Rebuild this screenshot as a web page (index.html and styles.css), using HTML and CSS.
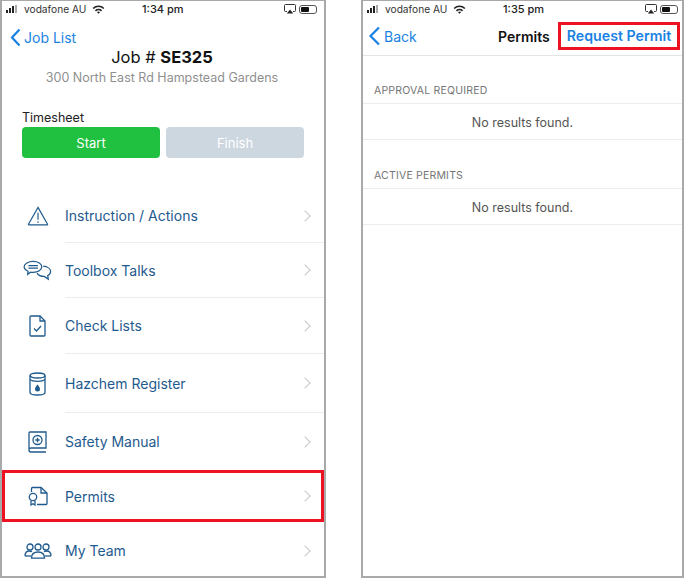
FILE: index.html
```html
<!DOCTYPE html>
<html lang="en">
<head>
    <meta charset="UTF-8">
    <meta name="viewport" content="width=device-width, initial-scale=1.0">
    <title>Job SE325 and Permits</title>
    <link rel="stylesheet" href="styles.css">
</head>
<body>
    <!-- Job screen -->
    <div class="phone phone-job">
        <div class="status-bar">
            <span class="signal"><i class="b1"></i><i class="b2"></i><i class="b3"></i><i class="b4"></i></span>
            <span class="carrier">vodafone AU</span>
            <svg class="wifi" width="13" height="9" viewBox="0 0 13 9"><path d="M0.6 3a8.4 8.4 0 0 1 11.8 0l-1.1 1.1a6.8 6.8 0 0 0-9.6 0z M2.9 5.3a5.2 5.2 0 0 1 7.2 0L9 6.4a3.6 3.6 0 0 0-5 0z M5 7.3a2 2 0 0 1 3 0L6.5 8.8z" fill="#222"/></svg>
            <span class="clock">1:34 pm</span>
            <svg class="airplay" width="12" height="10" viewBox="0 0 12 10"><path d="M3 7.5H1.5a1 1 0 0 1-1-1V1.5a1 1 0 0 1 1-1h9a1 1 0 0 1 1 1v5a1 1 0 0 1-1 1H9" fill="none" stroke="#333"/><path d="M6 5.5L9.2 9.5H2.8z" fill="#222"/></svg>
            <span class="battery"><i></i></span>
        </div>

        <a class="back-link">
            <svg width="11" height="19" viewBox="0 0 11 19"><path d="M9.5 1.5L2 9.5l7.5 8" fill="none" stroke="#1a82e2" stroke-width="2.2"/></svg>
            Job List
        </a>

        <div class="job-head">
            <h1>Job # <b>SE325</b></h1>
            <p>300 North East Rd Hampstead Gardens</p>
        </div>

        <div class="timesheet">
            <div class="timesheet-label">Timesheet</div>
            <div class="timesheet-btns">
                <button class="btn-start">Start</button>
                <button class="btn-finish">Finish</button>
            </div>
        </div>

        <ul class="menu">
            <li class="menu-row">
                <span class="menu-icon">
                    <svg width="22" height="20" viewBox="0 0 24 22"><path d="M12 1.5L22.5 20a.5.5 0 0 1-.4.7H1.9a.5.5 0 0 1-.4-.7z"/><path d="M12 7.5v7.5M12 16.8v1.7"/></svg>
                </span>
                <span class="menu-body">Instruction / Actions<i class="chevron"></i></span>
            </li>
            <li class="menu-row">
                <span class="menu-icon">
                    <svg width="29" height="21" viewBox="0 0 30 22"><path d="M10.5 1.5c5 0 9 2.4 9 5.7s-4 5.800-9 5.800c-1 0-2 0-2.800-.2L4.700 15l.4-3.200C2.800 10.800 1 9.200 1 7.200 1 3.900 5.500 1.500 10.500 1.500z"/><path d="M5.500 5.800h10M5.500 8.500h10"/><path d="M21 6.500c4.300.4 7.700 2.600 7.700 5.500 0 1.800-1.200 3.300-3 4.200l.6 3.800-4.200-2.800c-3.200 0-6.300-1.200-7.600-3.500"/></svg>
                </span>
                <span class="menu-body">Toolbox Talks<i class="chevron"></i></span>
            </li>
            <li class="menu-row">
                <span class="menu-icon">
                    <svg width="17" height="22" viewBox="0 0 17 22"><path d="M2 1h9l5 5v14a1 1 0 0 1-1 1H2a1 1 0 0 1-1-1V2a1 1 0 0 1 1-1z"/><path d="M11 1v5h5"/><path d="M5 13.500l2.500 2.500 4.500-5"/></svg>
                </span>
                <span class="menu-body">Check Lists<i class="chevron"></i></span>
            </li>
            <li class="menu-row">
                <span class="menu-icon">
                    <svg width="17" height="24" viewBox="0 0 17 24"><ellipse cx="8.500" cy="3.500" rx="7.500" ry="2.500"/><path d="M1 3.500v17c0 1.500 3.400 2.500 7.500 2.500s7.500-1 7.500-2.500v-17"/><path d="M1 7.500c1.500 1.300 4 1.800 7.500 1.800s6-.5 7.500-1.800"/><path class="solid" d="M8.500 12.500c1.500 2 2.500 3.200 2.500 4.500a2.500 2.500 0 0 1-5 0c0-1.300 1-2.500 2.500-4.500z"/></svg>
                </span>
                <span class="menu-body">Hazchem Register<i class="chevron"></i></span>
            </li>
            <li class="menu-row">
                <span class="menu-icon">
                    <svg width="19" height="22" viewBox="0 0 19 22"><path d="M1 18V2a1 1 0 0 1 1-1h16v16H3a2 2 0 0 0 0 4h15"/><circle cx="9.500" cy="9" r="4.500"/><path d="M9.500 6.800v4.400M7.300 9h4.400"/></svg>
                </span>
                <span class="menu-body">Safety Manual<i class="chevron"></i></span>
            </li>
            <li class="menu-row menu-row-marked">
                <span class="menu-icon">
                    <svg width="20" height="20" viewBox="0 0 20 20"><path d="M3.500 6V2.500a1 1 0 0 1 1-1H13l6 5.500v10.500a1 1 0 0 1-1 1H9"/><path d="M13 1.500V7h6"/><circle cx="5" cy="11" r="3.700"/><path d="M3 14.500V19l2-1.300L7 19v-4.500"/></svg>
                </span>
                <span class="menu-body">Permits<i class="chevron"></i></span>
            </li>
            <li class="menu-row">
                <span class="menu-icon">
                    <svg width="28" height="16" viewBox="0 0 28 16"><circle cx="6" cy="4" r="3"/><circle cx="14" cy="4" r="3"/><circle cx="22" cy="4" r="3"/><path d="M1 13c0-3 1.800-5 4.500-5 1 0 1.800.2 2.500.7"/><path d="M27 13c0-3-1.800-5-4.500-5-1 0-1.800.2-2.500.7"/><path d="M7.500 15.200c0-4 2.500-6.200 6.500-6.200s6.500 2.200 6.500 6.200z"/><path d="M1 13h6"/><path d="M21 13h6"/></svg>
                </span>
                <span class="menu-body">My Team<i class="chevron"></i></span>
            </li>
        </ul>
    </div>

    <!-- Permits screen -->
    <div class="phone phone-permits">
        <div class="status-bar">
            <span class="signal"><i class="b1"></i><i class="b2"></i><i class="b3"></i><i class="b4"></i></span>
            <span class="carrier">vodafone AU</span>
            <svg class="wifi" width="13" height="9" viewBox="0 0 13 9"><path d="M0.6 3a8.4 8.4 0 0 1 11.8 0l-1.1 1.1a6.8 6.8 0 0 0-9.6 0z M2.9 5.3a5.2 5.2 0 0 1 7.2 0L9 6.4a3.6 3.6 0 0 0-5 0z M5 7.3a2 2 0 0 1 3 0L6.5 8.8z" fill="#222"/></svg>
            <span class="clock">1:35 pm</span>
            <svg class="airplay" width="12" height="10" viewBox="0 0 12 10"><path d="M3 7.5H1.5a1 1 0 0 1-1-1V1.5a1 1 0 0 1 1-1h9a1 1 0 0 1 1 1v5a1 1 0 0 1-1 1H9" fill="none" stroke="#333"/><path d="M6 5.500L9.200 9.500H2.800z" fill="#222"/></svg>
            <span class="battery"><i></i></span>
        </div>

        <div class="nav-bar">
            <a class="nav-back">
                <svg width="13" height="20" viewBox="0 0 13 20"><path d="M11 1.500L2.500 10l8.500 8.500" fill="none" stroke="#1a82e2" stroke-width="2.200"/></svg>
                Back
            </a>
            <span class="nav-title">Permits</span>
            <a class="nav-action">Request Permit</a>
        </div>

        <h2 class="group-head">APPROVAL REQUIRED</h2>
        <div class="group-row">No results found.</div>
        <h2 class="group-head">ACTIVE PERMITS</h2>
        <div class="group-row">No results found.</div>
    </div>
</body>
</html>
```

FILE: styles.css
```css
:root {
    --blue: #1a82e2;
    --navy: #1f5a8e;
    --line: #ececec;
    --frame: #a9a9a9;
}

*, *::before, *::after {
    box-sizing: border-box;
    margin: 0;
    padding: 0;
}

html, body {
    height: 578px;
    overflow: hidden;
}

body {
    width: 687px;
    display: flex;
    justify-content: space-between;
    padding-right: 3px;
    background: #fff;
    font-family: Inter, "Liberation Sans", sans-serif;
    color: #111;
}

.phone {
    height: 578px;
    background: #fff;
    border: 2px solid var(--frame);
    border-top-width: 1px;
    overflow: hidden;
}

.phone-job {
    width: 326px;
}

.phone-permits {
    width: 323px;
}

/* status bar */
.status-bar {
    height: 16px;
    display: flex;
    align-items: center;
    padding-left: 4px;
    font-size: 10.2px;
    color: #333;
}

.signal {
    display: flex;
    align-items: flex-end;
    gap: 1px;
    height: 8px;
    width: 15px;
}

.signal i {
    width: 2px;
    background: #222;
}

.signal .b1 { height: 3px; }
.signal .b2 { height: 5px; }
.signal .b3 { height: 7px; }
.signal .b4 { height: 8px; background: #aaa; }

.carrier {
    margin-left: 3px;
    width: 66px;
    white-space: nowrap;
}

.wifi {
    margin-left: 2px;
}

.clock {
    margin-left: 37px;
    width: 42px;
    font-size: 11px;
    font-weight: 500;
    color: #222;
    white-space: nowrap;
}

.airplay {
    margin-left: 100px;
}

.battery {
    margin-left: 3px;
    width: 18px;
    height: 9px;
    padding: 1px;
    border: 1px solid #555;
    border-radius: 3px;
}

.battery i {
    display: block;
    width: 8px;
    height: 100%;
    background: #111;
    border-radius: 1px;
}

/* job header */
.back-link {
    height: 22px;
    margin-top: 9px;
    padding-left: 8px;
    display: flex;
    align-items: center;
    gap: 3px;
    font-size: 14px;
    color: var(--blue);
}

.job-head {
    text-align: center;
    margin-top: -2px;
    width: 320px;
}

.job-head h1 {
    font-size: 16.5px;
    line-height: 22px;
    font-weight: 400;
    color: #111;
}

.job-head p {
    margin-top: 2px;
    font-size: 12.5px;
    line-height: 16px;
    color: #8f8f8f;
}

.timesheet {
    margin-top: 24px;
    padding-left: 20px;
}

.timesheet-label {
    font-size: 12.5px;
    line-height: 16px;
    color: #222;
}

.timesheet-btns {
    display: flex;
    gap: 6px;
    margin-top: 1px;
}

.timesheet-btns button {
    width: 138px;
    height: 31px;
    border: none;
    border-radius: 4px;
    font-family: inherit;
    font-size: 13px;
    color: #fff;
}

.btn-start {
    background: #20c140;
}

.btn-finish {
    background: #cdd7e0;
    color: #eef1f4;
}

/* menu */
.menu {
    list-style: none;
    margin-top: 31px;
    display: grid;
    grid-template-rows: 54px 55px 56px 59px 57px 52px 57px;
}

.menu-row {
    display: flex;
    align-items: stretch;
    color: var(--navy);
    font-size: 14px;
}

.menu-icon {
    flex: none;
    width: 63px;
    display: flex;
    align-items: center;
    justify-content: center;
    padding-left: 8px;
}

.menu-icon svg {
    fill: none;
    stroke: var(--navy);
    stroke-width: 1.3;
}

.menu-icon .solid {
    fill: var(--navy);
    stroke: none;
}

.menu-body {
    flex: 1;
    display: flex;
    align-items: center;
    justify-content: space-between;
    padding-right: 15px;
    border-bottom: 1px solid var(--line);
}

.menu-row:nth-child(5) .menu-body,
.menu-row-marked .menu-body,
.menu-row:last-child .menu-body {
    border-bottom: none;
}

.menu-row-marked {
    box-shadow: inset 0 0 0 3px #ee1122;
}

.chevron {
    width: 8px;
    height: 8px;
    border-top: 1.5px solid #c8c8cc;
    border-right: 1.5px solid #c8c8cc;
    transform: rotate(45deg);
}

/* permits screen */
.nav-bar {
    height: 39px;
    display: flex;
    align-items: center;
    border-bottom: 1px solid #e4e4e4;
}

.nav-back {
    display: flex;
    align-items: center;
    gap: 3px;
    margin-left: 5px;
    font-size: 14px;
    color: var(--blue);
    width: 130px;
}

.nav-title {
    font-size: 14px;
    font-weight: 600;
    color: #111;
    width: 60px;
}

.nav-action {
    font-size: 14.2px;
    font-weight: 600;
    color: var(--blue);
    border: 3px solid #ee1122;
    height: 28px;
    line-height: 21px;
    width: 122px;
    text-align: center;
    white-space: nowrap;
}

.group-head {
    height: 47px;
    padding: 27px 0 0 11px;
    font-size: 10.5px;
    line-height: 16px;
    font-weight: 400;
    letter-spacing: 0.2px;
    color: #757575;
}

.group-row {
    height: 37px;
    padding-top: 1px;
    border-top: 1px solid var(--line);
    border-bottom: 1px solid var(--line);
    display: flex;
    align-items: center;
    justify-content: center;
    font-size: 12.5px;
    color: #555;
}

.group-row + .group-head {
    height: 48px;
    padding-top: 28px;
}
```
